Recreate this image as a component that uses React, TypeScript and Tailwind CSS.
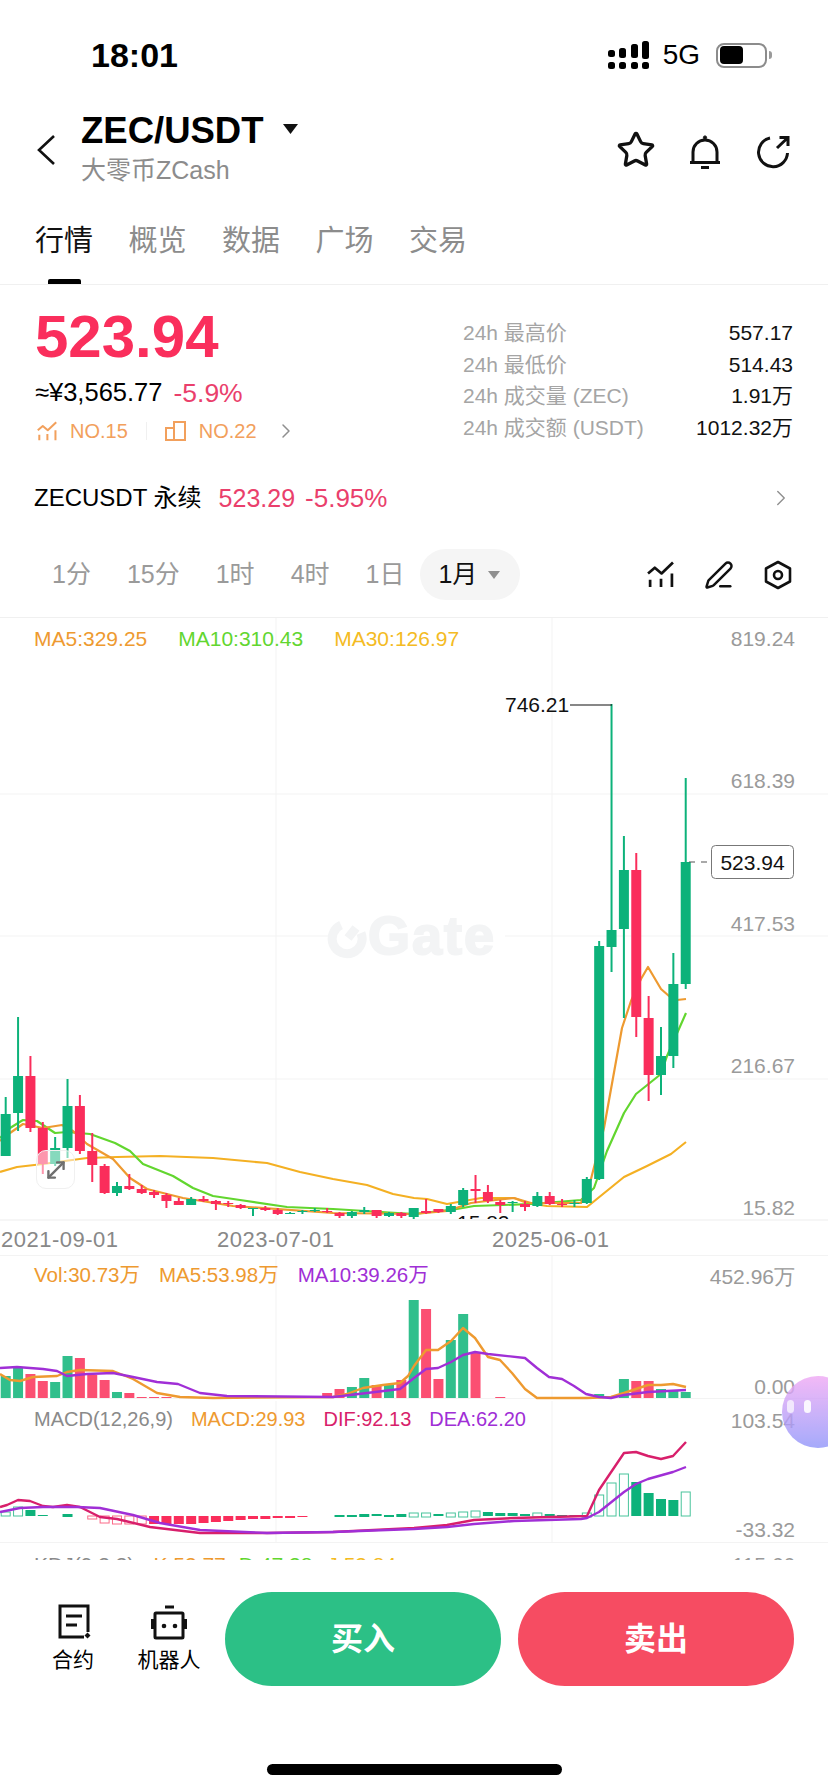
import { Star, MoveDiagonal, PenLine, ChevronRight } from 'lucide-react';

const FONT = "font-['Liberation_Sans','Noto_Sans_CJK_SC',sans-serif]";
const GRID = '#f3f3f3';
const GREEN = '#0db27a';
const RED = '#fa2d5b';
const AXIS = '#9a9a9a';

const cx = (i: number) => 5.7 + 12.364 * i;

// hi, body top, body bottom, lo, 1 = green
const candles: number[][] = [
  [1096, 1113, 1155, 1155, 1], [1016, 1075, 1112, 1130, 1], [1055, 1075, 1127, 1131, 0], [1121, 1127, 1163, 1173, 0],
  [1136, 1147, 1163, 1165, 1], [1078, 1105, 1147, 1157, 1], [1094, 1105, 1150, 1153, 0], [1132, 1150, 1164, 1181, 0],
  [1163, 1165, 1192, 1193, 0], [1181, 1185, 1192, 1195, 1], [1173, 1185, 1188, 1189, 0], [1184, 1188, 1192, 1193, 0],
  [1189, 1191, 1194, 1197, 0], [1192, 1194, 1200, 1207, 0], [1197, 1200, 1204, 1204, 0], [1196, 1198, 1204, 1204, 1],
  [1195, 1198, 1200, 1201, 0], [1199, 1200, 1203, 1209, 0], [1200, 1202, 1203, 1206, 0], [1203, 1204, 1207, 1208, 0],
  [1207, 1207, 1208, 1215, 1], [1205, 1207, 1209, 1210, 0], [1207, 1209, 1213, 1214, 0], [1211, 1212, 1213, 1213, 1],
  [1209, 1210, 1211, 1213, 1], [1207, 1209, 1210, 1211, 1], [1207, 1210, 1211, 1212, 0], [1211, 1212, 1215, 1217, 0],
  [1210, 1211, 1215, 1217, 1], [1206, 1209, 1211, 1213, 1], [1209, 1209, 1215, 1217, 0], [1211, 1212, 1215, 1216, 1],
  [1211, 1212, 1215, 1217, 0], [1207, 1207, 1216, 1218, 1], [1198, 1210, 1212, 1213, 0], [1208, 1208, 1211, 1212, 0],
  [1203, 1205, 1211, 1213, 1], [1187, 1189, 1204, 1206, 1], [1174, 1188, 1190, 1202, 0], [1184, 1191, 1200, 1202, 0],
  [1199, 1201, 1204, 1212, 0], [1200, 1201, 1202, 1211, 1], [1200, 1203, 1206, 1210, 0], [1191, 1195, 1205, 1206, 1],
  [1191, 1195, 1203, 1204, 0], [1198, 1203, 1204, 1206, 0], [1199, 1202, 1203, 1206, 1], [1176, 1178, 1202, 1203, 1],
  [940, 945, 1178, 1179, 1], [703, 929, 946, 971, 1], [835, 869, 928, 1017, 1], [852, 869, 1016, 1036, 0],
  [995, 1017, 1074, 1100, 0], [1026, 1055, 1074, 1094, 1], [952, 983, 1055, 1067, 1], [777, 861, 983, 988, 1],
];

const ma5 = [[0, 1140], [10, 1132], [23, 1123], [43, 1127], [62, 1124], [73, 1130], [87, 1143], [113, 1158], [130, 1177], [147, 1188], [183, 1197], [233, 1205], [333, 1212], [414, 1213], [447, 1210], [471, 1202], [487, 1200], [514, 1197], [531, 1202], [581, 1202], [591, 1178], [604, 1127], [622, 1027], [631, 1000], [641, 978], [648, 966], [661, 988], [669, 995], [677, 999], [686, 998]];
const ma10 = [[0, 1137], [10, 1127], [23, 1119], [37, 1120], [55, 1132], [67, 1131], [90, 1133], [115, 1142], [130, 1150], [143, 1163], [173, 1175], [193, 1187], [213, 1195], [240, 1199], [287, 1206], [333, 1208], [414, 1213], [457, 1208], [474, 1205], [531, 1203], [581, 1199], [594, 1187], [607, 1150], [624, 1112], [636, 1093], [661, 1073], [667, 1055], [686, 1012]];
const ma30 = [[0, 1171], [17, 1166], [43, 1163], [87, 1157], [117, 1156], [160, 1155], [213, 1157], [267, 1162], [300, 1171], [333, 1178], [367, 1184], [393, 1193], [414, 1197], [427, 1198], [447, 1203], [481, 1197], [514, 1197], [527, 1202], [547, 1205], [587, 1206], [624, 1176], [647, 1165], [671, 1153], [686, 1141]];

// bar top by candle index, green = 1
const volume: number[][] = [
  [0, 1375, 1], [1, 1367, 1], [2, 1373, 0], [3, 1380, 0], [4, 1381, 1], [5, 1355, 1], [6, 1357, 0], [7, 1374, 0], [8, 1379, 0],
  [9, 1391, 1], [10, 1392, 0], [11, 1396, 0], [12, 1396, 0], [13, 1396, 0], [26, 1392, 0], [27, 1388, 0], [28, 1386, 1],
  [29, 1377, 1], [30, 1384, 0], [31, 1383, 1], [32, 1379, 0], [33, 1299, 1], [34, 1308, 0], [35, 1378, 0], [36, 1339, 1],
  [37, 1313, 1], [38, 1351, 0], [40, 1396, 0], [48, 1393, 1], [50, 1378, 1], [51, 1380, 0], [52, 1380, 0], [53, 1388, 1],
  [54, 1389, 1], [55, 1391, 1],
];
const volMa5 = [[0, 1373], [10, 1379], [20, 1380], [33, 1376], [57, 1375], [67, 1371], [80, 1369], [113, 1370], [133, 1378], [157, 1392], [180, 1396], [213, 1397], [333, 1396], [347, 1393], [363, 1387], [383, 1384], [400, 1382], [408, 1375], [414, 1365], [426, 1349], [438, 1349], [451, 1340], [463, 1327], [475, 1337], [488, 1356], [500, 1359], [512, 1372], [525, 1388], [537, 1397], [587, 1397], [611, 1396], [624, 1392], [636, 1388], [648, 1384], [661, 1384], [673, 1383], [686, 1386]];
const volMa10 = [[0, 1367], [17, 1366], [43, 1368], [57, 1370], [67, 1375], [87, 1373], [113, 1372], [133, 1376], [157, 1381], [178, 1383], [200, 1392], [227, 1395], [333, 1396], [367, 1392], [400, 1388], [414, 1377], [426, 1368], [438, 1367], [451, 1361], [463, 1354], [475, 1351], [488, 1353], [525, 1357], [537, 1367], [549, 1376], [562, 1378], [574, 1385], [586, 1393], [599, 1396], [611, 1397], [624, 1394], [648, 1391], [686, 1389]];

// index, top, bottom, colour (1 green / 0 red), hollow
const macd: number[][] = [
  [0, 1512, 1516, 1, 1], [1, 1507, 1516, 1, 1], [2, 1510, 1516, 1, 0], [3, 1515, 1516, 1, 0], [5, 1514, 1517, 1, 0],
  [7, 1516, 1519, 0, 1], [8, 1516, 1523, 0, 1], [9, 1516, 1524, 0, 1], [10, 1516, 1524, 0, 1], [11, 1516, 1524, 0, 1],
  [12, 1516, 1524, 0, 0], [13, 1516, 1524, 0, 0], [14, 1516, 1524, 0, 0], [15, 1516, 1524, 0, 0], [16, 1516, 1523, 0, 0],
  [17, 1516, 1522, 0, 0], [18, 1516, 1521, 0, 0], [19, 1516, 1520, 0, 0], [20, 1516, 1519, 0, 0], [21, 1516, 1519, 0, 0],
  [22, 1516, 1518, 0, 0], [23, 1516, 1518, 0, 0], [24, 1516, 1517, 0, 0], [27, 1515, 1517, 1, 0], [28, 1515, 1517, 1, 0],
  [29, 1514, 1517, 1, 0], [30, 1514, 1516, 1, 0], [31, 1515, 1517, 1, 0], [32, 1514, 1517, 1, 0], [33, 1513, 1517, 1, 1],
  [34, 1513, 1517, 1, 1], [35, 1514, 1516, 1, 0], [36, 1513, 1517, 1, 1], [37, 1512, 1517, 1, 1], [38, 1511, 1517, 1, 1],
  [39, 1512, 1516, 1, 0], [40, 1513, 1516, 1, 0], [41, 1513, 1516, 1, 0], [42, 1514, 1516, 1, 0], [43, 1513, 1517, 1, 1],
  [44, 1514, 1516, 1, 0], [45, 1515, 1516, 1, 0], [46, 1515, 1516, 1, 0], [47, 1513, 1517, 1, 1], [48, 1495, 1516, 1, 1],
  [49, 1483, 1516, 1, 1], [50, 1474, 1516, 1, 1], [51, 1482, 1516, 1, 0], [52, 1493, 1516, 1, 0], [53, 1499, 1516, 1, 0],
  [54, 1500, 1516, 1, 0], [55, 1492, 1516, 1, 1],
];
const dif = [[0, 1507], [7, 1505], [18, 1500], [30, 1501], [43, 1506], [53, 1507], [67, 1505], [80, 1507], [100, 1517], [117, 1519], [150, 1527], [200, 1533], [267, 1533], [333, 1532], [414, 1528], [447, 1525], [474, 1520], [514, 1518], [587, 1516], [599, 1490], [624, 1453], [636, 1452], [648, 1456], [661, 1459], [673, 1456], [686, 1442]];
const dea = [[0, 1512], [20, 1508], [43, 1507], [77, 1507], [100, 1508], [133, 1515], [160, 1523], [200, 1530], [267, 1533], [333, 1532], [414, 1529], [447, 1527], [474, 1524], [514, 1521], [581, 1519], [587, 1518], [599, 1512], [624, 1492], [636, 1484], [648, 1479], [673, 1472], [686, 1467]];

const toPoints = (pts: number[][]) => pts.map((p) => p.join(',')).join(' ');

function Line({ pts, color, width = 2.2 }: { pts: number[][]; color: string; width?: number }) {
  return <polyline points={toPoints(pts)} fill="none" stroke={color} strokeWidth={width} strokeLinejoin="round" />;
}

function AxisLabel({ y, children }: { y: number; children: string }) {
  return (
    <text x={795} y={y} textAnchor="end" fontSize={21} fill={AXIS}>
      {children}
    </text>
  );
}

function VLines({ top, bottom }: { top: number; bottom: number }) {
  return (
    <>
      <line x1={276} x2={276} y1={top} y2={bottom} stroke={GRID} />
      <line x1={552} x2={552} y1={top} y2={bottom} stroke={GRID} />
    </>
  );
}

function ChartIcon({ color, size }: { color: string; size: number }) {
  return (
    <svg width={size} height={size} viewBox="0 0 26 26" fill="none" stroke={color} strokeWidth="2.6">
      <path d="M1 12 7.5 6.5 14 12 25 1.5" strokeLinejoin="round" />
      <path d="M3 18v7M13.5 17v8M24 12v13" />
    </svg>
  );
}

function PriceChart() {
  return (
    <svg className="absolute inset-0" width={828} height={638} viewBox="0 617 828 638" fontFamily="Liberation Sans, sans-serif">
      <VLines top={617} bottom={1219} />
      <line x1={0} x2={828} y1={793} y2={793} stroke={GRID} />
      <line x1={0} x2={328} y1={935} y2={935} stroke={GRID} />
      <line x1={505} x2={828} y1={935} y2={935} stroke={GRID} />
      <line x1={0} x2={828} y1={1078} y2={1078} stroke={GRID} />
      <line x1={0} x2={828} y1={1219} y2={1219} stroke="#ededed" />

      {/* watermark */}
      <path d="M341 924a15 15 0 1 0 20 8" fill="none" stroke="#f3f4f5" strokeWidth="9" />
      <path d="M348 937l8-10" fill="none" stroke="#f3f4f5" strokeWidth="9" />
      <text x={368} y={953} fontSize={54} fontWeight={700} letterSpacing={2} fill="#f3f4f5" stroke="#f3f4f5" strokeWidth={2}>
        Gate
      </text>

      <Line pts={ma30} color="#f4b023" />
      <Line pts={ma10} color="#62d62f" />
      <Line pts={ma5} color="#ee9a30" />

      {candles.map(([hi, top, bot, lo, up], i) => {
        const c = up ? GREEN : RED;
        return (
          <g key={i}>
            <line x1={cx(i)} x2={cx(i)} y1={hi} y2={lo} stroke={c} strokeWidth={2} />
            <rect x={cx(i) - 5} y={top} width={10} height={Math.max(bot - top, 1)} fill={c} />
          </g>
        );
      })}

      {/* high / low marks */}
      <line x1={570} x2={612} y1={704} y2={704} stroke="#111" strokeWidth={1.2} />
      <text x={505} y={711} fontSize={21} fill="#111">
        746.21
      </text>
      <clipPath id="low-clip">
        <rect x={440} y={1205} width={90} height={13} />
      </clipPath>
      <text x={457} y={1229} fontSize={21} fill="#111" clipPath="url(#low-clip)">
        15.82
      </text>

      {/* last price */}
      <line x1={689} x2={708} y1={861} y2={861} stroke="#555" strokeWidth={1.2} strokeDasharray="6 6" />
      <rect x={711.5} y={844.5} width={82} height={33} rx={4} fill="#fff" stroke="#777" />
      <text x={752.5} y={868.5} textAnchor="middle" fontSize={21} fill="#111">
        523.94
      </text>

      <AxisLabel y={645}>819.24</AxisLabel>
      <AxisLabel y={787}>618.39</AxisLabel>
      <AxisLabel y={930}>417.53</AxisLabel>
      <AxisLabel y={1072}>216.67</AxisLabel>
      <AxisLabel y={1214}>15.82</AxisLabel>

      <text x={1} y={1246} fontSize={22} letterSpacing={0.5} fill="#888">2021-09-01</text>
      <text x={217} y={1246} fontSize={22} letterSpacing={0.5} fill="#888">2023-07-01</text>
      <text x={492} y={1246} fontSize={22} letterSpacing={0.5} fill="#888">2025-06-01</text>
    </svg>
  );
}

function VolumeChart() {
  return (
    <svg className="absolute inset-0" width={828} height={146} viewBox="0 1255 828 146" fontFamily="Liberation Sans, sans-serif">
      <VLines top={1255} bottom={1397} />
      <line x1={0} x2={828} y1={1397.5} y2={1397.5} stroke={GRID} />
      {volume.map(([i, top, up]) => (
        <rect key={i} x={cx(i) - 5} y={top} width={10} height={1397 - top} fill={up ? '#31bf8c' : '#fb4f72'} />
      ))}
      <Line pts={volMa5} color="#ee9a30" width={2.4} />
      <Line pts={volMa10} color="#a02fd6" width={2.4} />
      <AxisLabel y={1283}>452.96万</AxisLabel>
      <AxisLabel y={1393}>0.00</AxisLabel>
    </svg>
  );
}

function MacdChart() {
  return (
    <svg className="absolute inset-0" width={828} height={141} viewBox="0 1401 828 141" fontFamily="Liberation Sans, sans-serif">
      <VLines top={1401} bottom={1542} />
      {macd.map(([i, top, bot, up, hollow]) => {
        const c = up ? GREEN : RED;
        return hollow ? (
          <rect key={i} x={cx(i) - 4.5} y={top} width={9} height={bot - top} fill="none" stroke={up ? '#48c49b' : '#fb6a88'} strokeWidth={1} />
        ) : (
          <rect key={i} x={cx(i) - 5} y={top} width={10} height={bot - top} fill={c} />
        );
      })}
      <Line pts={dif} color="#d81f6b" width={2.4} />
      <Line pts={dea} color="#a02fd6" width={2.4} />
      <AxisLabel y={1428}>103.54</AxisLabel>
      <AxisLabel y={1537}>-33.32</AxisLabel>
    </svg>
  );
}

export default function App() {
  return (
    <div className={`relative flex h-[1792px] w-[828px] flex-col overflow-hidden bg-white text-black ${FONT}`}>
      {/* Status bar */}
      <div className="flex h-[110px] shrink-0 items-center pl-[91px] pr-[56px]">
        <span className="text-[34px] font-bold leading-none">18:01</span>
        <div className="ml-auto flex items-center">
          <svg width={46} height={30} viewBox="0 0 46 30" fill="#000">
            <rect x={2} y={10} width={7} height={7} rx={2.5} />
            <rect x={13} y={8} width={7} height={10} rx={2.5} />
            <rect x={25} y={4} width={7} height={14} rx={2.5} />
            <rect x={36} y={1} width={7} height={18} rx={2.5} />
            <rect x={2} y={22} width={7} height={7} rx={2.5} />
            <rect x={13} y={22} width={7} height={7} rx={2.5} />
            <rect x={25} y={22} width={7} height={7} rx={2.5} />
            <rect x={36} y={22} width={7} height={7} rx={2.5} />
          </svg>
          <span className="ml-[11px] text-[28px] leading-none">5G</span>
          <div className="ml-[16px] flex h-[25px] w-[51px] items-center rounded-[8px] border-2 border-[#8c8c8c] px-[2px]">
            <div className="h-[18px] w-[23px] rounded-[4px] bg-black" />
          </div>
          <div className="ml-[2px] h-[8px] w-[3px] rounded-r-full bg-[#9a9a9a]" />
        </div>
      </div>

      {/* Header */}
      <div className="flex h-[80px] shrink-0 items-center">
        <svg className="ml-[34px]" width={24} height={34} viewBox="0 0 24 34" fill="none" stroke="#111" strokeWidth={2.6}>
          <path d="M20 3 5 17l15 14" />
        </svg>
        <div className="ml-[23px]">
          <div className="flex h-[40px] items-center pt-[3px] text-[36.5px] font-bold leading-none">
            ZEC/USDT
            <svg className="ml-[19px] mt-[-6px]" width={15} height={10} viewBox="0 0 15 10" fill="#111">
              <path d="M0 0h15L7.5 10z" />
            </svg>
          </div>
          <div className="flex h-[40px] items-center text-[25px] leading-none text-[#8c8c8c]">大零币ZCash</div>
        </div>
        <div className="ml-auto flex items-center pr-[33px]">
          <Star size={40} strokeWidth={2} color="#111" />
          <svg className="ml-[27px]" width={44} height={44} viewBox="0 0 44 44" fill="none" stroke="#111" strokeWidth={3}>
            <path d="M10 34V24a12 12 0 0 1 24 0v10" />
            <path d="M7 34.5h30M18 39.5h8" />
            <circle cx={22} cy={9.5} r={1.6} fill="#111" strokeWidth={1} />
          </svg>
          <svg className="ml-[24px]" width={44} height={44} viewBox="0 0 44 44" fill="none" stroke="#111" strokeWidth={3}>
            <path d="M19 10A14.5 14.5 0 1 0 36.5 25" />
            <path d="M26 20 36.5 10M28.5 9.5h8.5V18" />
          </svg>
        </div>
      </div>

      {/* Tabs */}
      <div className="flex h-[95px] shrink-0 gap-[35.5px] border-b border-[#f0f0f0] px-[35px] pt-[33px]">
        {['行情', '概览', '数据', '广场', '交易'].map((tab, i) => (
          <div key={tab} className="flex flex-col items-center">
            <span className={`text-[29px] leading-[36px] ${i === 0 ? 'text-[#111]' : 'text-[#8c8c8c]'}`}>{tab}</span>
            {i === 0 && <div className="mt-[20px] h-[5px] w-[33px] rounded-t-[2px] bg-black" />}
          </div>
        ))}
      </div>

      {/* Price + 24h stats */}
      <div className="flex h-[188px] shrink-0 pl-[35px] pr-[35px]">
        <div className="pt-[22px]">
          <div className="text-[60px] font-bold leading-[60px] text-[#fa2e5c]">523.94</div>
          <div className="mt-[9px] flex h-[34px] items-center text-[25.5px] leading-none">
            <span>≈¥3,565.77</span>
            <span className="ml-[11px] text-[26.5px] text-[#ea3f6c]">-5.9%</span>
          </div>
          <div className="mt-[6px] flex h-[30px] items-center pl-[2px] text-[20px] leading-none text-[#f2a05c]">
            <ChartIcon color="#f2a05c" size={20} />
            <span className="ml-[13px]">NO.15</span>
            <div className="ml-[18px] h-[18px] w-px bg-[#f0f0f0]" />
            <svg className="ml-[18px]" width={21} height={20} viewBox="0 0 21 20" fill="none" stroke="#f2a05c" strokeWidth={2}>
              <path d="M9 7H1v12h19V1H9v18" />
            </svg>
            <span className="ml-[13px]">NO.22</span>
            <ChevronRight className="ml-[17px]" size={24} strokeWidth={1.5} color="#8f8f8f" />
          </div>
        </div>
        <div className="ml-auto w-[330px] pt-[32px] text-[21px] leading-[31.7px]">
          {[
            ['24h 最高价', '557.17'],
            ['24h 最低价', '514.43'],
            ['24h 成交量 (ZEC)', '1.91万'],
            ['24h 成交额 (USDT)', '1012.32万'],
          ].map(([label, value]) => (
            <div key={label} className="flex justify-between">
              <span className="text-[#a5a5a5]">{label}</span>
              <span className="text-[#111]">{value}</span>
            </div>
          ))}
        </div>
      </div>

      {/* Perpetual row */}
      <div className="flex h-[50px] shrink-0 items-center pl-[34px] pr-[34px] text-[24px] leading-none">
        <span>ZECUSDT 永续</span>
        <span className="ml-[17px] text-[25px] text-[#ea3f6c]">523.29</span>
        <span className="ml-[10px] text-[26px] text-[#ea3f6c]">-5.95%</span>
        <ChevronRight className="ml-auto" size={26} strokeWidth={1.3} color="#8f8f8f" />
      </div>

      {/* Timeframes */}
      <div className="mt-[26px] mb-[17px] flex h-[51px] shrink-0 items-center gap-[36px] pl-[52px] pr-[36px] text-[25px] leading-none text-[#9a9a9a]">
        <span>1分</span>
        <span>15分</span>
        <span>1时</span>
        <span>4时</span>
        <span>1日</span>
        <div className="-ml-[20px] flex h-[51px] w-[100px] items-center rounded-full bg-[#f5f5f5] pl-[18px] text-[#111]">
          1月
          <svg className="ml-[11px]" width={12} height={8} viewBox="0 0 12 8" fill="#8f8f8f">
            <path d="M0 0h12L6 8z" />
          </svg>
        </div>
        <div className="ml-auto flex items-center gap-[30px] text-[#111]">
          <ChartIcon color="#111" size={27} />
          <PenLine size={30} strokeWidth={2} color="#111" />
          <svg width={28} height={30} viewBox="0 0 28 30" fill="none" stroke="#111" strokeWidth={2.6}>
            <path d="M14 2 26 8.5v13L14 28 2 21.5v-13z" strokeLinejoin="round" />
            <circle cx={14} cy={15} r={4} />
          </svg>
        </div>
      </div>

      {/* Price chart */}
      <div className="relative h-[638px] shrink-0 border-t border-[#f0f0f0]">
        <PriceChart />
        <div className="relative flex h-[41px] items-center gap-[31px] pl-[34px] text-[21px] leading-none">
          <span className="text-[#ee9a30]">MA5:329.25</span>
          <span className="text-[#62d62f]">MA10:310.43</span>
          <span className="text-[#f4bb23]">MA30:126.97</span>
        </div>
        <div className="absolute left-[36px] top-[532px] flex h-[39px] w-[39px] items-center justify-center rounded-[10px] border border-[#f0f0f0] bg-white/50">
          <MoveDiagonal size={26} strokeWidth={2.2} color="#6f6f6f" />
        </div>
      </div>

      {/* Volume */}
      <div className="relative h-[146px] shrink-0 border-t border-[#f3f3f3]">
        <VolumeChart />
        <div className="relative flex h-[39px] items-center gap-[19px] pl-[34px] text-[20.5px] leading-none">
          <span className="text-[#ee9a30]">Vol:30.73万</span>
          <span className="text-[#ee9a30]">MA5:53.98万</span>
          <span className="text-[#a02fd6]">MA10:39.26万</span>
        </div>
      </div>

      {/* MACD */}
      <div className="relative h-[141px] shrink-0">
        <MacdChart />
        <div className="relative flex h-[36px] items-center gap-[18px] pl-[34px] text-[20px] leading-none">
          <span className="text-[#8a8a8a]">MACD(12,26,9)</span>
          <span className="text-[#ee9a30]">MACD:29.93</span>
          <span className="text-[#d81f6b]">DIF:92.13</span>
          <span className="text-[#a02fd6]">DEA:62.20</span>
        </div>
      </div>

      {/* KDJ, cut off by the bottom bar */}
      <div className="h-[18px] shrink-0 overflow-hidden border-t border-[#f3f3f3]">
        <div className="flex h-[42px] items-center pl-[34px] pr-[33px] text-[21px] leading-none">
          <span className="text-[#8a8a8a]">KDJ(9,3,3)</span>
          <span className="ml-[19px] text-[#ee9a30]">K:53.77</span>
          <span className="ml-[13px] text-[#62d62f]">D:47.38</span>
          <span className="ml-[15px] text-[#f4bb23]">J:53.84</span>
          <span className="ml-auto text-[#9a9a9a]">115.66</span>
        </div>
      </div>

      {/* Bottom actions */}
      <div className="flex flex-1 flex-col items-center bg-white pt-[32px]">
        <div className="flex h-[94px] w-full items-start pl-[52px] pr-[34px]">
          <div className="mt-[12px] flex w-[42px] flex-col items-center">
            <svg width={36} height={36} viewBox="0 0 36 36" fill="none" stroke="#111" strokeWidth={3}>
              <path d="M33 28V2H5v31h24" />
              <path d="M11 12h16M11 21h11" />
              <path d="M32.5 28.5l3 3-3 3-3-3z" fill="#111" stroke="none" />
            </svg>
            <span className="mt-[6px] text-[21px] leading-[28px] whitespace-nowrap">合约</span>
          </div>
          <div className="ml-[43px] mt-[12px] flex w-[64px] flex-col items-center">
            <svg width={36} height={36} viewBox="0 0 36 36" fill="none" stroke="#111" strokeWidth={3}>
              <path d="M14 3h9" />
              <rect x={4} y={9} width={28} height={25} rx={1} />
              <path d="M1.5 15v10M34.5 15v10" />
              <circle cx={13} cy={22} r={2.3} fill="#111" stroke="none" />
              <circle cx={24} cy={22} r={2.3} fill="#111" stroke="none" />
            </svg>
            <span className="mt-[6px] text-[21px] leading-[28px] whitespace-nowrap">机器人</span>
          </div>
          <button className="ml-[24px] flex h-[94px] w-[276px] items-center justify-center rounded-full bg-[#2cc086] text-[32px] font-bold text-white">
            买入
          </button>
          <button className="ml-[17px] flex h-[94px] w-[276px] items-center justify-center rounded-full bg-[#f64c62] text-[32px] font-bold text-white">
            卖出
          </button>
        </div>
        <div className="mt-[78px] h-[11px] w-[295px] rounded-full bg-black" />
      </div>

      {/* Floating assistant */}
      <div className="absolute left-[782px] top-[1376px] flex h-[72px] w-[72px] gap-[10px] rounded-full bg-linear-to-b from-[#f0a8f5] to-[#8f95fa] pl-[5px] pt-[24px] opacity-80">
        <div className="h-[13px] w-[7px] rounded-full bg-white/70" />
        <div className="h-[13px] w-[7px] rounded-full bg-white/90" />
      </div>
    </div>
  );
}
